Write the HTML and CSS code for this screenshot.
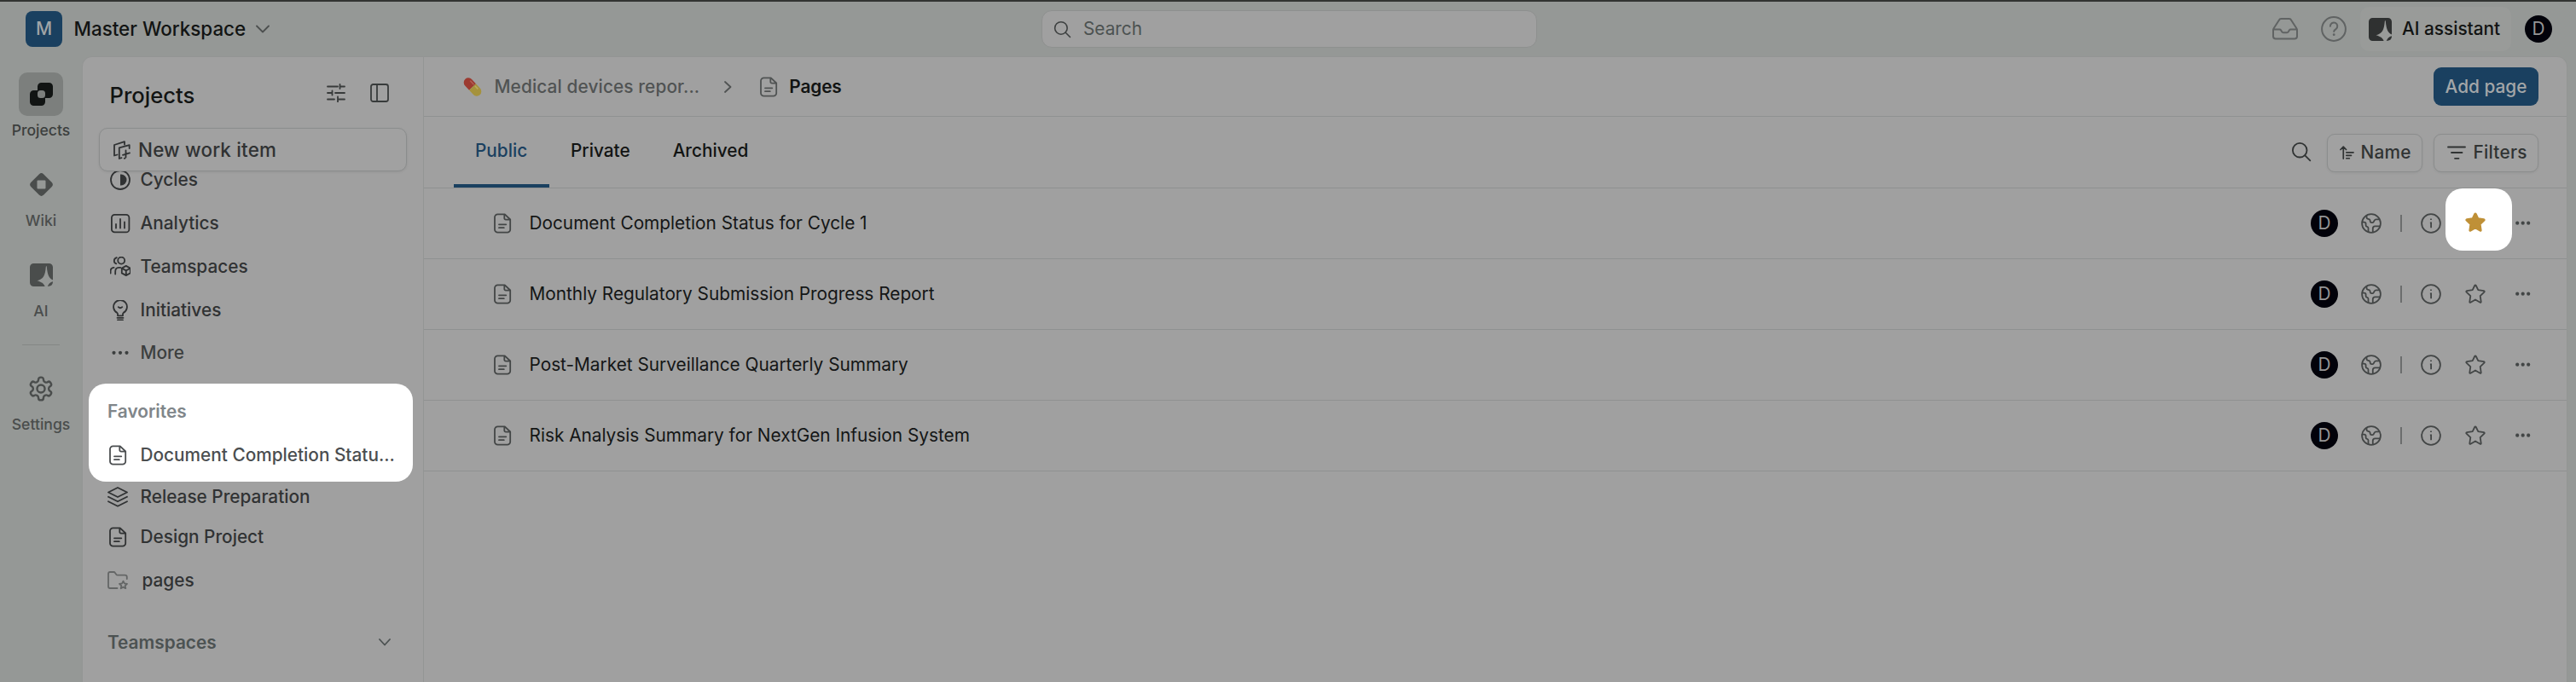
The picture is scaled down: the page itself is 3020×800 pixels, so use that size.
FILE: index.html
```html
<!DOCTYPE html>
<html lang="en">
<head>
<meta charset="utf-8">
<title>Pages</title>
<link rel="stylesheet" href="styles.css">
</head>
<body>
<svg class="defs" aria-hidden="true">
  <symbol id="ai" viewBox="0 0 27 27"><path fill="currentColor" d="M4.500 0H22.500a4.500 4.500 0 0 1 4.500 4.500V19.500C23 18 20.700 14 19.800 4Q19.300 2.200 18.800 4C18 14 16 18.500 8.500 20.200C13.500 21.800 16.500 23.300 17.600 27H4.500a4.500 4.500 0 0 1-4.500-4.500V4.500a4.500 4.500 0 0 1 4.500-4.500zM20.800 27C21.800 24.200 24 21.800 27 21.200C27.200 25 25 27 20.800 27z"/></symbol>
  <symbol id="doc" viewBox="0 0 24 24"><g fill="none" stroke="currentColor" stroke-width="1.800" stroke-linecap="round" stroke-linejoin="round"><path d="M14.800 1.300H6.500a3.500 3.500 0 0 0-3.500 3.500v14.400a3.500 3.500 0 0 0 3.500 3.500h11.200a3.500 3.500 0 0 0 3.500-3.500V7.500zM14.300 1.500v4.500a1.700 1.700 0 0 0 1.700 1.700h5M8 13.300h8.300M8 17.200h5.800"/></g></symbol>
  <symbol id="globe" viewBox="0 0 24 24"><g fill="none" stroke="currentColor" stroke-width="1.800" stroke-linejoin="round"><circle cx="12" cy="12" r="10.900"/><path d="M6.500 2.600v2.200a2 2 0 0 0 1.600 2l1.200.3a1.800 1.800 0 0 1 1.300 1.500l.1 1.100a1.700 1.700 0 0 0 1.700 1.500h.8a1.700 1.700 0 0 0 1.500-.9l.9-1.700a2.400 2.400 0 0 1 2.100-1.200h3.800M1.100 10.600h2.600a1.900 1.900 0 0 1 1.900 1.900v1.600a1.900 1.900 0 0 0 1.500 1.800 1.800 1.800 0 0 1 1.400 1.800v4.600M13.800 22.600v-4.700a2.600 2.600 0 0 1 2.600-2.600h5.900"/></g></symbol>
  <symbol id="info" viewBox="0 0 24 24"><g fill="none" stroke="currentColor" stroke-width="1.800"><circle cx="12" cy="12" r="10.900"/><path d="M10.900 11.300h1.200v6M12 6.400v1.500"/></g></symbol>
  <symbol id="star" viewBox="0 0 24 24"><path stroke="currentColor" stroke-width="1.800" stroke-linejoin="round" d="M12 1.300c.4 0 .6.300.8.700l2.500 5.200 6.600.9c.9.200 1.100.9.500 1.500l-4.700 4.500 1 6.900c.1.800-.4 1.200-1.100.8L12 18.500l-5.600 3.300c-.7.400-1.200 0-1.100-.8l1-6.900L1.600 9.600c-.6-.6-.4-1.300.5-1.500l6.600-.9L11.200 2c.2-.4.4-.7.800-.7z"/></symbol>
  <symbol id="dots" viewBox="0 0 20 20"><g fill="currentColor"><circle cx="3.200" cy="9.700" r="2.100"/><circle cx="9.700" cy="9.700" r="2.100"/><circle cx="16.200" cy="9.700" r="2.100"/></g></symbol>
  <symbol id="search" viewBox="0 0 24 24"><g fill="none" stroke="currentColor" stroke-width="1.800" stroke-linecap="round"><circle cx="10.200" cy="10.200" r="8.300"/><path d="M16.300 16.300l6 6"/></g></symbol>
</svg>

<div class="app">
  <header class="header">
    <div class="brand">
      <span class="brand-mark">M</span>
      <span class="brand-name">Master Workspace</span>
      <svg class="brand-chev" viewBox="0 0 16 10"><path class="ln" d="M1 1.500l7 7 7-7"/></svg>
    </div>
    <div class="search"><svg class="search-icon"><use href="#search"/></svg><span>Search</span></div>
    <div class="tools">
      <svg class="inbox" viewBox="0 0 30 26"><path class="ln" d="M1 13.500h7.500q1 0 1.500.8l1.200 2q.6 1 1.700 1h4.200q1.100 0 1.700-1l1.200-2q.5-.8 1.500-.8H29M7.800 2.800q.6-1.700 2.600-1.700h9.200q2 0 2.600 1.700L28.200 12q.8 1.200.8 2.600v6.800q0 3-3 3H4q-3 0-3-3v-6.800q0-1.400.8-2.600z"/></svg>
      <svg class="help" viewBox="0 0 30 30"><circle class="ln" cx="15" cy="15" r="13.900"/><path class="ln" d="M10.900 11.800a4.200 4.200 0 1 1 6.600 3.300q-2.300 1.500-2.300 3"/><circle cx="15.200" cy="21.700" r="1.400" fill="currentColor"/></svg>
      <div class="assistant"><svg class="ai-icon"><use href="#ai"/></svg><span>AI assistant</span></div>
      <span class="avatar">D</span>
    </div>
  </header>

  <div class="body">
    <nav class="rail">
      <div class="rail-item current"><span class="rail-box"><svg class="rail-icon" viewBox="0 0 27 27"><path fill="currentColor" fill-rule="evenodd" d="M13.500 0h9a4.500 4.500 0 0 1 4.500 4.500v9a4.500 4.500 0 0 1-4.500 4.500H18v4.500a4.500 4.500 0 0 1-4.500 4.500h-9A4.500 4.500 0 0 1 0 22.500v-9A4.500 4.500 0 0 1 4.500 9H9V4.500A4.500 4.500 0 0 1 13.500 0zM12.500 9A3.500 3.500 0 0 0 9 12.500V14.500A3.500 3.500 0 0 0 12.500 18H14.500A3.500 3.500 0 0 0 18 14.500V12.500A3.500 3.500 0 0 0 14.500 9z"/></svg></span><span class="rail-label">Projects</span></div>
      <div class="rail-item"><span class="rail-box"><svg class="rail-icon" viewBox="0 0 27 27"><path fill="currentColor" fill-rule="evenodd" d="M11 1.200q2.500-2.200 5 0L25.800 11q2.200 2.500 0 5L16 25.800q-2.500 2.200-5 0L1.200 16q-2.200-2.500 0-5zM8.500 9.500v8q0 1 1 1h8q1 0 1-1v-8q0-1-1-1h-8q-1 0-1 1z"/></svg></span><span class="rail-label">Wiki</span></div>
      <div class="rail-item"><span class="rail-box"><svg class="rail-icon"><use href="#ai"/></svg></span><span class="rail-label">AI</span></div>
      <div class="rail-rule"></div>
      <div class="rail-item"><span class="rail-box"><svg class="gear" viewBox="0 0 24 24"><path class="ln" d="M12.220 2h-.44a2 2 0 0 0-2 2v.18a2 2 0 0 1-1 1.730l-.43.25a2 2 0 0 1-2 0l-.15-.08a2 2 0 0 0-2.730.73l-.22.38a2 2 0 0 0 .73 2.730l.15.1a2 2 0 0 1 1 1.720v.51a2 2 0 0 1-1 1.740l-.15.09a2 2 0 0 0-.73 2.730l.22.38a2 2 0 0 0 2.730.73l.15-.08a2 2 0 0 1 2 0l.43.25a2 2 0 0 1 1 1.730V20a2 2 0 0 0 2 2h.44a2 2 0 0 0 2-2v-.18a2 2 0 0 1 1-1.730l.43-.25a2 2 0 0 1 2 0l.15.08a2 2 0 0 0 2.730-.73l.22-.39a2 2 0 0 0-.73-2.730l-.15-.08a2 2 0 0 1-1-1.740v-.5a2 2 0 0 1 1-1.740l.15-.09a2 2 0 0 0 .73-2.730l-.22-.38a2 2 0 0 0-2.730-.73l-.15.08a2 2 0 0 1-2 0l-.43-.25a2 2 0 0 1-1-1.730V4a2 2 0 0 0-2-2z"/><circle class="ln" cx="12" cy="12" r="3.400"/></svg></span><span class="rail-label">Settings</span></div>
    </nav>

    <aside class="sidebar">
      <div class="side-head">
        <h1>Projects</h1>
        <svg class="sliders" viewBox="0 0 22 22"><path class="ln" d="M1 3.500h12M16 3.500h5M15.500 1v5M1 11h5M10 11h11M6.500 8.500v5M1 18.500h8M13.500 18.500H21M13 15.500v6"/></svg>
        <svg class="panel" viewBox="0 0 22 22"><rect class="ln" x="1" y="1" width="20" height="20" rx="2.500"/><path class="ln" d="M8 1v20"/></svg>
      </div>
      <button class="new-item"><svg class="new-icon" viewBox="0 0 20 22"><path class="ln" d="M13 4.500V1.200L1 5v12.500l3.500-1M18.700 9V5.200L6.800 8.300V21l2.700-.9M14.500 11.500v8M11 16.800l8-2.500M12.800 20.800l.6-.2"/></svg><span>New work item</span></button>
      <div class="side-scroll">
        <div class="nav">
          <a class="item"><svg class="ico" viewBox="0 0 24 24"><circle class="ln" cx="12" cy="12" r="11"/><path fill="currentColor" d="M12 5.500h1a6.500 6.500 0 0 1 0 13h-1z"/></svg>Cycles</a>
          <a class="item"><svg class="ico" viewBox="0 0 24 24"><rect class="ln" x="1.900" y="1.900" width="20.500" height="20.500" rx="3.500"/><path class="ln" d="M7 13v4.500M12 7v10.500M17 10.500v7"/></svg>Analytics</a>
          <a class="item"><svg class="ico" viewBox="0 0 24 24"><circle class="ln" cx="13.200" cy="4.600" r="4"/><path class="ln" d="M7.800 1.200q-3 1.200-3 3.700t2.500 3.400M.6 19.500v-2.300q0-4 4-4.300M6.200 20.500v-2.800q0-4.500 4-4.800h2M18.800 10.900l5 2.700v5.800l-5 2.700-5-2.700v-5.800zM13.800 13.700l5 2.700 5-2.700M18.800 16.500v5.500"/></svg>Teamspaces</a>
          <a class="item"><svg class="ico" viewBox="0 0 24 24"><path class="ln" d="M9 18.300v-2.100q0-.8-.7-1.300a7.900 7.900 0 1 1 7.400 0q-.7.500-.7 1.300v2.100zM9 23.300h6M9.800 8.200q2.200 2.200 4.400 0M8.500 20.800h7"/></svg>Initiatives</a>
          <a class="item more"><svg class="ico" viewBox="0 0 24 24"><g fill="currentColor"><circle cx="4.500" cy="11.800" r="2.100"/><circle cx="12" cy="11.800" r="2.100"/><circle cx="19.500" cy="11.800" r="2.100"/></g></svg>More</a>
        </div>
        <section class="spotlight">
          <h2>Favorites</h2>
          <a class="item fav"><svg class="ico"><use href="#doc"/></svg>Document Completion Statu...</a>
        </section>
        <div class="favs">
          <a class="item fav first"><svg class="ico" viewBox="0 0 24 24"><path class="ln" d="M12 1l11 5.500-11 5.500L1 6.500zM1 11.800l11 5.500 11-5.500M1 17.200l11 5.500 11-5.500"/></svg>Release Preparation</a>
          <a class="item fav second"><svg class="ico"><use href="#doc"/></svg>Design Project</a>
          <a class="item fav"><svg class="ico folder" viewBox="0 0 24 24"><path class="ln" d="M11.500 21H3q-2 0-2-2V4q0-2 2-2h4.200q1.200 0 1.800 1l1.200 1.700q.6.900 1.800.9h8.500q2.300 0 2.300 2.200V10M18.500 12.600l1.400 2.800 3.100.4-2.300 2.200.6 3.200-2.800-1.600-2.800 1.600.6-3.200-2.300-2.200 3.100-.4z"/></svg><span class="folder-name">pages</span></a>
        </div>
        <div class="teams"><h2>Teamspaces</h2><svg class="teams-chev" viewBox="0 0 14 9"><path class="ln" d="M1 1l6 6.500L13 1"/></svg></div>
      </div>
    </aside>

    <main class="main">
      <div class="crumbs">
        <svg class="pill" viewBox="0 0 20 20"><g transform="rotate(47 10 10)"><path fill="#9c3a30" d="M10 4.600H2.800a5.400 5.400 0 0 0 0 10.800H10z"/><path fill="#a5923c" d="M10 4.600h7.200a5.400 5.400 0 0 1 0 10.800H10z"/><path fill="#c98078" opacity=".5" d="M3 6.300h6v1.500H2.500z"/><path fill="#d0c480" opacity=".5" d="M11 6.300h5v1.500h-5z"/></g></svg>
        <span class="crumb">Medical devices repor...</span>
        <svg class="crumb-chev" viewBox="0 0 9 14"><path class="ln" d="M1 1l6.500 6L1 13"/></svg>
        <svg class="ico crumb-doc"><use href="#doc"/></svg>
        <span class="crumb here">Pages</span>
        <button class="primary">Add page</button>
      </div>
      <div class="tabs">
        <a class="tab active">Public</a><a class="tab">Private</a><a class="tab">Archived</a>
        <div class="actions">
          <svg class="ico find"><use href="#search"/></svg>
          <button class="ghost name"><svg class="sort" viewBox="0 0 18 17"><path class="ln" d="M4.500 16V1.500M1 4.800l3.500-3.500L8 4.800M8.300 8.300H17M8.300 12h6M8.300 15.700h3.700"/></svg>Name</button>
          <button class="ghost filters"><svg class="filter" viewBox="0 0 22 17"><path class="ln" d="M1 1.500h20M5 8h12.500M9 14.800h4.500"/></svg>Filters</button>
        </div>
      </div>
      <div class="row"><svg class="ico"><use href="#doc"/></svg><span class="title">Document Completion Status for Cycle 1</span><span class="avatar">D</span><svg class="ico globe"><use href="#globe"/></svg><i class="bar"></i><svg class="ico info"><use href="#info"/></svg><span class="halo"><svg class="ico"><use href="#star"/></svg></span><svg class="dots"><use href="#dots"/></svg></div>
      <div class="row"><svg class="ico"><use href="#doc"/></svg><span class="title">Monthly Regulatory Submission Progress Report</span><span class="avatar">D</span><svg class="ico globe"><use href="#globe"/></svg><i class="bar"></i><svg class="ico info"><use href="#info"/></svg><span class="fav-cell"><svg class="ico"><use href="#star"/></svg></span><svg class="dots"><use href="#dots"/></svg></div>
      <div class="row"><svg class="ico"><use href="#doc"/></svg><span class="title">Post-Market Surveillance Quarterly Summary</span><span class="avatar">D</span><svg class="ico globe"><use href="#globe"/></svg><i class="bar"></i><svg class="ico info"><use href="#info"/></svg><span class="fav-cell"><svg class="ico"><use href="#star"/></svg></span><svg class="dots"><use href="#dots"/></svg></div>
      <div class="row"><svg class="ico"><use href="#doc"/></svg><span class="title">Risk Analysis Summary for NextGen Infusion System</span><span class="avatar">D</span><svg class="ico globe"><use href="#globe"/></svg><i class="bar"></i><svg class="ico info"><use href="#info"/></svg><span class="fav-cell"><svg class="ico"><use href="#star"/></svg></span><svg class="dots"><use href="#dots"/></svg></div>
    </main>
  </div>
</div>
</body>
</html>
```
FILE: styles.css
```css
* { box-sizing: border-box; }
body { margin: 0; font: 500 20.8px/26px Inter, "Liberation Sans", sans-serif; color: #303233; background: #959896; }
h1, h2 { margin: 0; font: inherit; }
button { margin: 0; padding: 0; font: inherit; color: inherit; text-align: left; }
svg { display: block; flex: none; }
.defs { position: absolute; width: 0; height: 0; }
.ln { fill: none; stroke: currentColor; stroke-width: 1.8; stroke-linecap: round; stroke-linejoin: round; }
.ico { width: 24px; height: 24px; }

.app { width: 3020px; height: 800px; overflow: hidden; border-top: 2px solid #323432; display: flex; flex-direction: column; white-space: nowrap; }

.header { height: 64px; display: grid; grid-template-columns: 1221px 581px 1fr; align-items: center; }
.brand { display: flex; align-items: center; padding-left: 30px; font-size: 22.4px; color: #121413; }
.brand-mark { width: 43px; height: 42px; border-radius: 8px; background: #1a4060; color: #a0a4a6; text-align: center; line-height: 42px; font-size: 21px; margin-right: 13.500px; }
.brand-name { width: 213.500px; }
.brand-chev { width: 16px; height: 10px; color: #4c4f4f; }
.search { height: 44px; border: 1px solid #8e908f; border-radius: 12px; background: #a0a0a0; display: flex; align-items: center; padding-left: 13px; color: #4c5251; font-weight: 400; }
.search-icon { width: 21px; height: 21px; color: #3d4040; margin-right: 14px; }
.tools { display: flex; align-items: center; color: #606363; }
.inbox { width: 30px; height: 26px; margin-left: 862px; }
.inbox .ln, .help .ln { stroke-width: 2; }
.help { width: 30px; height: 30px; margin-left: 27px; }
.assistant { width: 177px; height: 52px; margin-left: 16px; border-radius: 10px; background: #999b99; padding-left: 10px; display: flex; align-items: center; gap: 12px; color: #121413; }
.ai-icon { width: 27px; height: 27px; color: #2f3131; }
.avatar { width: 32px; height: 32px; border-radius: 50%; background: #02020a; color: #969696; text-align: center; line-height: 32px; font-weight: 400; }
.tools .avatar { margin-left: 16px; }

.body { flex: 1; min-height: 0; display: grid; grid-template-columns: 96px 401px 1fr; padding-right: 10px; }
.rail { padding-top: 19px; color: #4a4d4c; font-size: 17.6px; line-height: 22px; }
.rail-item { height: 106px; display: flex; flex-direction: column; align-items: center; gap: 5.500px; }
.rail-box { width: 52px; height: 51px; display: flex; align-items: center; justify-content: center; border-radius: 10px; }
.rail-icon { width: 27px; height: 27px; }
.current { color: #3c3f3e; }
.current .rail-box { background: #7c7f7d; color: #111413; }
.rail-rule { width: 44px; height: 1px; background: #858886; margin: 1px auto 25px; }
.gear { width: 32px; height: 32px; }

.sidebar { background: #a0a0a0; border: 1px solid #939594; border-bottom: 0; border-top-left-radius: 12px; display: flex; flex-direction: column; min-height: 0; }
.side-head { height: 83px; padding: 0 40px 0 31.500px; display: flex; align-items: center; color: #383b3b; }
.side-head h1 { font-size: 25.6px; color: #121413; margin: 7px auto 0 0; }
.side-head svg { width: 22px; height: 22px; }
.sliders { margin-right: 29px; }
.new-item { position: relative; z-index: 1; width: 361px; height: 51px; margin-left: 19px; border: 1px solid #8b8d8d; border-radius: 10px; background: #a1a1a1; box-shadow: 0 1px 3px rgba(0,0,0,.08); display: flex; align-items: center; gap: 9px; padding-left: 16px; font-size: 22.4px; letter-spacing: .2px; flex: none; }
.new-icon { width: 20px; height: 22px; }
.side-scroll { flex: 1; min-height: 0; margin-top: -16px; }
.nav { padding-left: 32px; }
.item { height: 51px; display: flex; align-items: center; gap: 11.500px; }
.fav { gap: 14.500px; padding-left: 29px; }
.more { height: 50px; color: #3c3f3f; }
.spotlight { width: 380px; height: 115px; margin: 11px 0 0 7px; padding-top: 7px; border-radius: 20px; background: #fff; color: #4b4e50; }
.spotlight h2 { height: 51px; line-height: 51px; padding-left: 22px; color: #80868a; font-weight: 600; }
.spotlight .fav { padding-left: 22px; }
.first { height: 35px; margin-bottom: 6px; }
.second { height: 48px; margin-bottom: 1px; }
.folder { color: #646666; }
.folder-name { margin-left: 2px; }
.teams { height: 51px; margin-top: 22px; padding: 0 38px 0 29px; display: flex; align-items: center; justify-content: space-between; color: #4c5252; font-weight: 600; }
.teams-chev { width: 14px; height: 9px; }

.main { background: #a0a0a0; border: 1px solid #939594; border-width: 1px 1px 0 0; border-top-right-radius: 12px; }
.crumbs { height: 70px; border-bottom: 1px solid #8f9191; display: flex; align-items: center; padding: 0 33px 0 47px; }
.pill { width: 20px; height: 20px; margin-right: 15.500px; overflow: visible; }
.crumb { color: #505353; letter-spacing: .12px; }
.crumb-chev { width: 9px; height: 14px; margin: 0 31px 0 28.500px; color: #505353; }
.crumb-doc { color: #505353; margin-right: 12.500px; }
.here { color: #121413; margin-right: auto; font-weight: 600; letter-spacing: -.1px; }
.primary { width: 123px; height: 45px; border: 0; border-radius: 9px; background: #1a4060; color: #a3a6a8; text-align: center; }
.tabs { height: 84px; border-bottom: 1px solid #8f9191; display: flex; padding: 0 33px 0 35px; color: #121413; line-height: 80px; }
.tab { padding: 0 25px; }
.tab.active { width: 112px; color: #1a4060; box-shadow: inset 0 -4px #1a4060; border-radius: 3px 3px 0 0; }
.actions { margin-left: auto; display: flex; align-items: center; color: #303333; line-height: 26px; }
.find { margin: -1px 18.500px 0 0; }
.ghost { height: 45px; border: 1px solid #8b8d8d; border-radius: 9px; background: #a1a1a1; box-shadow: 0 1px 3px rgba(0,0,0,.06); display: flex; align-items: center; margin-top: 1px; letter-spacing: .25px; }
.name { width: 112px; padding-left: 14px; gap: 7.500px; margin-right: 13px; }
.filters { width: 123px; padding-left: 15px; gap: 8.500px; }
.sort { width: 17px; height: 16px; }
.filter { width: 22px; height: 17px; }

.row { height: 83px; border-bottom: 1px solid #8f9191; display: flex; align-items: center; padding-left: 79.500px; color: #434646; }
.title { margin-left: 20px; margin-right: auto; font-weight: 400; color: #141616; }
.row .avatar { margin-right: 27px; }
.globe { margin-right: 22px; }
.bar { width: 2px; height: 20px; background: #6b6d6d; margin-right: 22px; }
.info { margin-right: 5px; }
.halo, .fav-cell { width: 78px; height: 73px; display: flex; align-items: center; justify-content: center; fill: none; margin-right: 3px; padding-right: 9px; }
.halo { background: #fff; border-radius: 20px; color: #bf9037; fill: #bf9037; margin-top: -9px; padding-top: 7px; }
.dots { width: 20px; height: 20px; margin-right: 41px; }
```
